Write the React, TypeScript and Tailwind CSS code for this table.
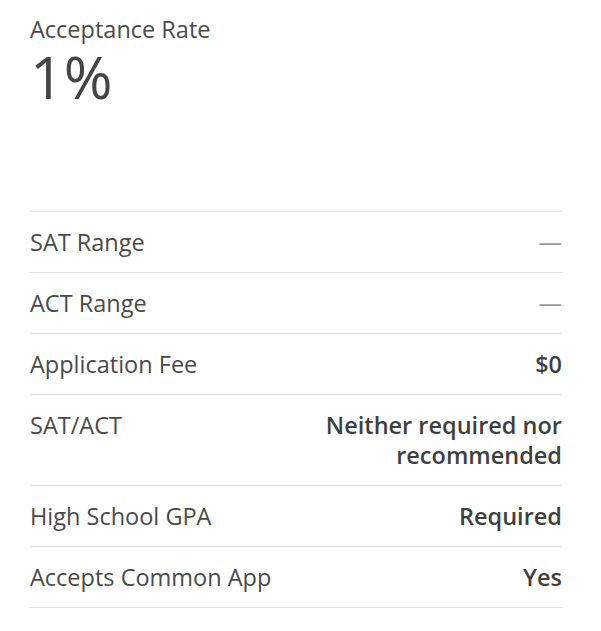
const rows: { label: string; value: string; muted?: boolean }[] = [
  { label: 'SAT Range', value: '—', muted: true },
  { label: 'ACT Range', value: '—', muted: true },
  { label: 'Application Fee', value: '$0' },
  { label: 'SAT/ACT', value: 'Neither required nor recommended' },
  { label: 'High School GPA', value: 'Required' },
  { label: 'Accepts Common App', value: 'Yes' },
];

export default function App() {
  return (
    <div className="min-h-screen bg-white px-[30px] pt-[14px] text-[#4a4a4a] [font-family:'Open_Sans',sans-serif]">
      <div className="h-[197px]">
        <div className="text-[23.5px] leading-[31px]">Acceptance Rate</div>
        <div className="text-[59px] leading-[62px] text-[#454545]">1%</div>
      </div>
      <div className="w-[532px] border-t border-[#e3e3e3]">
        {rows.map((r) => (
          <div key={r.label} className="flex justify-between gap-6 border-b border-[#e3e3e3] py-[15px] text-[23.5px] leading-[30px]">
            <span className="shrink-0">{r.label}</span>
            <span className={r.muted ? 'text-right text-[#9a9a9a]' : 'max-w-[250px] text-right font-semibold text-[#3f3f3f]'}>
              {r.value}
            </span>
          </div>
        ))}
      </div>
    </div>
  );
}
